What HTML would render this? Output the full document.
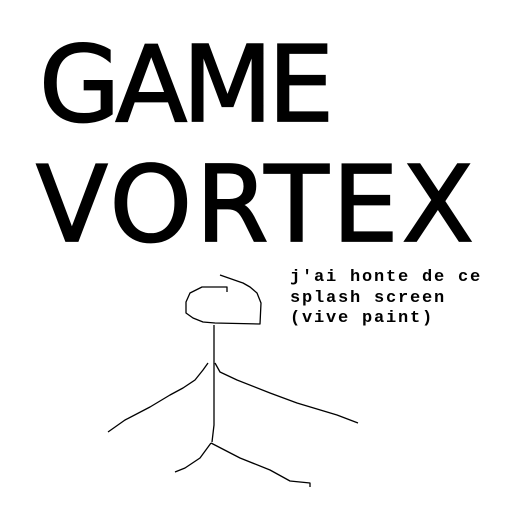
<!DOCTYPE html>
<html><head><style>
html,body{margin:0;padding:0;background:#fff;width:512px;height:512px;overflow:hidden}
.t{position:absolute;font-family:"DejaVu Sans","Liberation Sans",sans-serif;font-size:105px;color:#000;line-height:1;white-space:nowrap;-webkit-text-stroke:1.8px #000}
.s{position:absolute;left:290px;top:268px;font-family:"Liberation Mono",monospace;font-size:17px;font-weight:bold;letter-spacing:1.8px;line-height:20.5px;color:#000;white-space:pre}
svg{position:absolute;left:0;top:0}
</style></head><body>
<div class="t" style="left:39px;top:33px;letter-spacing:-5px">GAME</div>
<div class="t" style="left:36px;top:153px;letter-spacing:3.5px">VORTEX</div>
<div class="s">j'ai honte de ce
splash screen
(vive paint)</div>
<svg width="512" height="512" fill="none" stroke="#000" stroke-width="1.3" stroke-linejoin="round">
<path d="M227,292 L227,287 L202,287 L190,293 L186,302 L186,313 L193,318 L203,322 L215,323 L260,324 L261,303 L257,293 L250,287 L243,283 L240,282 L220,275"/>
<path d="M214,325 L214,425 L212,442"/>
<path d="M208,363 L203,370 L195,380 L183,388 L170,395 L150,407 L125,420 L108,432"/>
<path d="M215,363 L220,372 L237,380 L270,393 L297,403 L337,415 L358,423"/>
<path d="M211,443 L240,458 L270,470 L290,481 L310,483 L310,487"/>
<path d="M211,443 L200,458 L185,468 L175,472"/>
</svg>
</body></html>
